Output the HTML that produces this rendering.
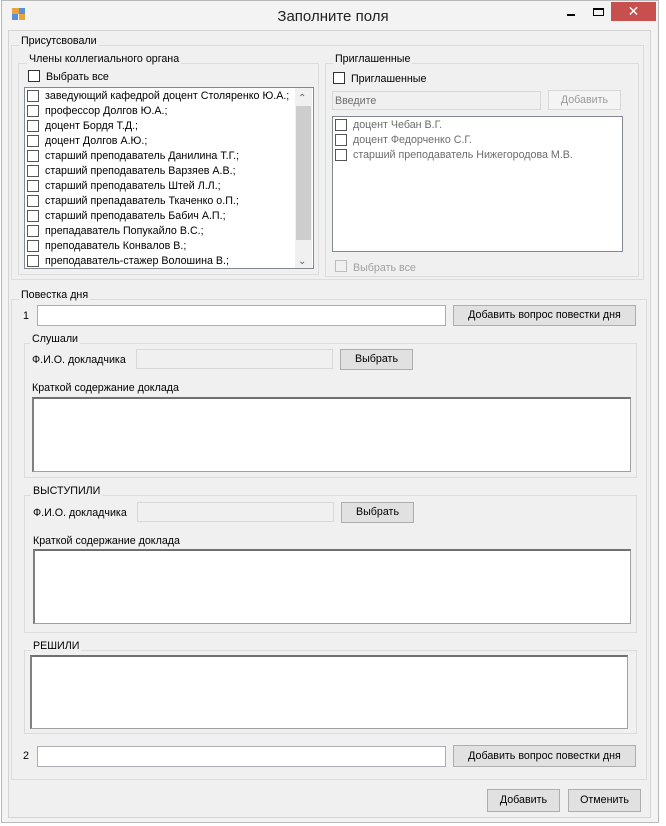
<!DOCTYPE html>
<html><head><meta charset="utf-8"><style>
*{box-sizing:border-box;margin:0;padding:0}
body{width:666px;height:826px;background:#fff;position:relative;overflow:hidden;font-family:"Liberation Sans","DejaVu Sans",sans-serif;font-size:10.7px;color:#000}
.a{position:absolute}
.win{left:1px;top:0;width:658px;height:823px;background:#f3f3f3;border:1px solid #b9b9b9}
.client{left:8px;top:30px;width:643px;height:788px;background:#f0f0f0;border:1px solid #d4d4d4}
.g{position:absolute;border:1px solid #dcdcdc}
.gl{position:absolute;background:#f0f0f0;padding:0 2px;white-space:nowrap;line-height:12px}
.cb{position:absolute;width:12px;height:12px;border:1px solid #333;background:#fff}
.cbd{border-color:#bcbcbc;background:#f0f0f0}
.t{position:absolute;white-space:nowrap;line-height:13px;margin-top:1px}
.tb{position:absolute;background:#fff;border:1px solid #abadb3}
.tbd{background:#f0f0f0;border-color:#d8d8d8}
.btn{position:absolute;background:#e1e1e1;border:1px solid #adadad;text-align:center;white-space:nowrap}
.ta{position:absolute;background:#fff;border:1px solid #a0a0a0;border-top:2px solid #707070;border-left:2px solid #808080}
</style></head><body>
<div class="a win"></div>
<div class="a" style="left:12px;top:8px;width:7px;height:6px;background:#e8a33a"></div>
<div class="a" style="left:19px;top:8px;width:6px;height:6px;background:#5b8fd6"></div>
<div class="a" style="left:12px;top:14px;width:6px;height:6px;background:#5b8fd6"></div>
<div class="a" style="left:19px;top:14px;width:6px;height:6px;background:#e8a33a"></div>
<div class="t" style="left:0;width:666px;text-align:center;top:7px;font-size:15px;line-height:18px;color:#222">Заполните поля</div>
<div class="a" style="left:567px;top:14px;width:8px;height:2px;background:#000"></div>
<div class="a" style="left:593px;top:8px;width:11px;height:8px;border:1px solid #000;border-top-width:2px"></div>
<div class="a" style="left:611px;top:2px;width:45px;height:19px;background:#c7504f;color:#fff;text-align:center;font-size:14px;line-height:19px">✕</div>
<div class="a client"></div>

<div class="g" style="left:11px;top:45px;width:633px;height:235px"></div>
<div class="gl" style="left:19px;top:35px">Присутсвовали</div>
<div class="g" style="left:18px;top:63px;width:301px;height:212px"></div>
<div class="gl" style="left:27px;top:53px">Члены коллегиального органа</div>
<div class="cb" style="left:28px;top:70px"></div>
<div class="t" style="left:46px;top:70px">Выбрать все</div>
<div class="tb" style="left:24px;top:87px;width:290px;height:182px;border-color:#828790"></div>
<div class="a" style="left:295px;top:88px;width:17px;height:180px;background:#f0f0f0"></div>
<div class="a" style="left:296px;top:106px;width:15px;height:134px;background:#cdcdcd"></div>
<div class="t" style="left:298px;top:91px;color:#606060;font-size:10px">⌃</div>
<div class="t" style="left:298px;top:254px;color:#606060;font-size:10px">⌄</div>
<div id="l1"></div>

<div class="g" style="left:325px;top:63px;width:314px;height:214px"></div>
<div class="gl" style="left:333px;top:53px">Приглашенные</div>
<div class="cb" style="left:333px;top:72px"></div>
<div class="t" style="left:351px;top:72px">Приглашенные</div>
<div class="tb tbd" style="left:332px;top:91px;width:209px;height:19px"></div>
<div class="t" style="left:335px;top:94px;color:#6d6d6d">Введите</div>
<div class="btn" style="left:548px;top:90px;width:73px;height:20px;background:#f4f4f4;border-color:#d8d8d8;color:#9a9a9a;line-height:18px">Добавить</div>
<div class="tb" style="left:332px;top:116px;width:291px;height:136px;border-color:#828790"></div>
<div class="cb" style="left:335px;top:119px;border-color:#555"></div><div class="t" style="left:353px;top:118px;color:#6d6d6d">доцент Чебан В.Г.</div>
<div class="cb" style="left:335px;top:134px;border-color:#555"></div><div class="t" style="left:353px;top:133px;color:#6d6d6d">доцент Федорченко С.Г.</div>
<div class="cb" style="left:335px;top:149px;border-color:#555"></div><div class="t" style="left:353px;top:148px;color:#6d6d6d">старший преподаватель Нижегородова М.В.</div>
<div class="cb cbd" style="left:335px;top:260px"></div>
<div class="t" style="left:353px;top:261px;color:#a0a0a0">Выбрать все</div>

<div class="g" style="left:11px;top:299px;width:636px;height:481px"></div>
<div class="gl" style="left:19px;top:289px">Повестка дня</div>
<div class="t" style="left:23px;top:309px">1</div>
<div class="tb" style="left:37px;top:305px;width:409px;height:21px"></div>
<div class="btn" style="left:453px;top:305px;width:183px;height:21px;line-height:19px">Добавить вопрос повестки дня</div>

<div class="g" style="left:24px;top:343px;width:613px;height:135px"></div>
<div class="gl" style="left:30px;top:333px">Слушали</div>
<div class="t" style="left:32px;top:353px">Ф.И.О. докладчика</div>
<div class="tb tbd" style="left:136px;top:349px;width:197px;height:20px"></div>
<div class="btn" style="left:340px;top:349px;width:73px;height:21px;line-height:19px">Выбрать</div>
<div class="t" style="left:32px;top:381px">Краткой содержание доклада</div>
<div class="ta" style="left:32px;top:397px;width:599px;height:75px"></div>

<div class="g" style="left:24px;top:495px;width:613px;height:138px"></div>
<div class="gl" style="left:31px;top:485px">ВЫСТУПИЛИ</div>
<div class="t" style="left:33px;top:506px">Ф.И.О. докладчика</div>
<div class="tb tbd" style="left:137px;top:502px;width:197px;height:20px"></div>
<div class="btn" style="left:341px;top:502px;width:73px;height:21px;line-height:19px">Выбрать</div>
<div class="t" style="left:33px;top:534px">Краткой содержание доклада</div>
<div class="ta" style="left:33px;top:549px;width:598px;height:75px"></div>

<div class="g" style="left:24px;top:650px;width:613px;height:84px"></div>
<div class="gl" style="left:31px;top:640px">РЕШИЛИ</div>
<div class="ta" style="left:30px;top:655px;width:598px;height:74px"></div>

<div class="t" style="left:23px;top:749px">2</div>
<div class="tb" style="left:37px;top:746px;width:409px;height:21px"></div>
<div class="btn" style="left:453px;top:745px;width:183px;height:22px;line-height:20px">Добавить вопрос повестки дня</div>

<div class="btn" style="left:487px;top:789px;width:73px;height:23px;line-height:21px">Добавить</div>
<div class="btn" style="left:568px;top:789px;width:73px;height:23px;line-height:21px">Отменить</div>

<script>
var items=["заведующий кафедрой доцент Столяренко Ю.А.;","профессор Долгов Ю.А.;","доцент Бордя Т.Д.;","доцент Долгов А.Ю.;","старший преподаватель Данилина Т.Г.;","старший преподаватель Варзяев А.В.;","старший преподаватель Штей Л.Л.;","старший препадаватель Ткаченко о.П.;","старший преподаватель Бабич А.П.;","препадаватель Попукайло В.С.;","преподаватель Конвалов В.;","преподаватель-стажер Волошина В.;"];
var h="";items.forEach(function(s,i){var y=90+i*15;h+='<div class="cb" style="left:27px;top:'+y+'px;border-color:#555"></div><div class="t" style="left:45px;top:'+(y-1)+'px">'+s+'</div>';});
document.getElementById("l1").outerHTML=h;
</script>
</body></html>
